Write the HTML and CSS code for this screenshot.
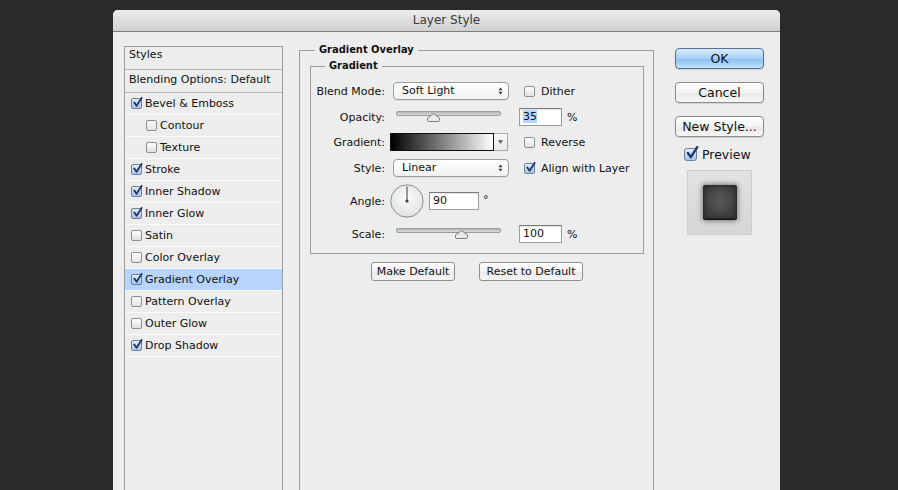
FILE: index.html
```html
<!DOCTYPE html>
<html>
  <head>
    <title>Layer Style</title>
    <meta charset="UTF-8">
    <link rel="stylesheet" href="styles.css">
  </head>
  <body>
    <div class="window">
      <div class="titlebar">Layer Style</div>
      <div class="main">
        <ul class="styles">
          <li class="head first">Styles</li>
          <li class="head">Blending Options: Default</li>
          <li><span class="cb on"><svg viewBox="0 0 12 12"><path d="M2.5 6 L5 9.5 L10.5 1"/></svg></span>Bevel &amp; Emboss</li>
          <li class="sub"><span class="cb"></span>Contour</li>
          <li class="sub"><span class="cb"></span>Texture</li>
          <li><span class="cb on"><svg viewBox="0 0 12 12"><path d="M2.5 6 L5 9.5 L10.5 1"/></svg></span>Stroke</li>
          <li><span class="cb on"><svg viewBox="0 0 12 12"><path d="M2.5 6 L5 9.5 L10.5 1"/></svg></span>Inner Shadow</li>
          <li><span class="cb on"><svg viewBox="0 0 12 12"><path d="M2.5 6 L5 9.5 L10.5 1"/></svg></span>Inner Glow</li>
          <li><span class="cb"></span>Satin</li>
          <li><span class="cb"></span>Color Overlay</li>
          <li class="selected"><span class="cb on"><svg viewBox="0 0 12 12"><path d="M2.5 6 L5 9.5 L10.5 1"/></svg></span>Gradient Overlay</li>
          <li><span class="cb"></span>Pattern Overlay</li>
          <li><span class="cb"></span>Outer Glow</li>
          <li><span class="cb on"><svg viewBox="0 0 12 12"><path d="M2.5 6 L5 9.5 L10.5 1"/></svg></span>Drop Shadow</li>
        </ul>

        <fieldset class="group">
          <legend>Gradient Overlay</legend>
          <fieldset class="inner">
            <legend>Gradient</legend>
            <div class="row r26">
              <label>Blend Mode:</label>
              <div class="ctl">
                <div class="select">Soft Light<svg class="updown" viewBox="0 0 6 10"><path d="M0.5 4 L3 0.8 L5.5 4 Z M0.5 6 L3 9.2 L5.5 6 Z"/></svg></div>
              </div>
              <div class="extra"><span class="cb"></span><span class="cbl">Dither</span></div>
            </div>
            <div class="row r26">
              <label>Opacity:</label>
              <div class="ctl">
                <div class="slider"><div class="track"></div><svg class="thumb" style="left: 35%" viewBox="0 0 13 9"><path d="M6.5 0.5 L12.5 5 V7.5 Q12.5 8.5 11.5 8.5 H1.5 Q0.5 8.5 0.5 7.5 V5 Z"/></svg></div>
              </div>
              <div class="extra"><div class="field"><span class="sel">35</span></div><span class="unit">%</span></div>
            </div>
            <div class="row r24">
              <label>Gradient:</label>
              <div class="ctl">
                <div class="swatch"><div class="ramp"></div><div class="drop"><svg viewBox="0 0 6 4"><path d="M0 0 H6 L3 4 Z"/></svg></div></div>
              </div>
              <div class="extra"><span class="cb"></span><span class="cbl">Reverse</span></div>
            </div>
            <div class="row r28">
              <label>Style:</label>
              <div class="ctl">
                <div class="select">Linear<svg class="updown" viewBox="0 0 6 10"><path d="M0.5 4 L3 0.8 L5.5 4 Z M0.5 6 L3 9.2 L5.5 6 Z"/></svg></div>
              </div>
              <div class="extra"><span class="cb on"><svg viewBox="0 0 12 12"><path d="M2.5 6 L5 9.5 L10.5 1"/></svg></span><span class="cbl">Align with Layer</span></div>
            </div>
            <div class="row r38">
              <label>Angle:</label>
              <div class="ctl">
                <svg class="dial" viewBox="0 0 34 34">
                  <defs>
                    <radialGradient id="dialfill" cx="0.5" cy="0.4" r="0.6">
                      <stop offset="0" stop-color="#fbfbfb"/>
                      <stop offset="1" stop-color="#e2e2e2"/>
                    </radialGradient>
                  </defs>
                  <circle cx="17" cy="17" r="16.2" fill="url(#dialfill)" stroke="#8c8c8c" stroke-width="1"/>
                  <line x1="17" y1="17" x2="17" y2="2.5" stroke="#3a3a3a" stroke-width="1"/>
                  <circle cx="17" cy="17" r="1.6" fill="#3a3a3a"/>
                </svg>
                <div class="field angle">90</div>
                <span class="deg">°</span>
              </div>
            </div>
            <div class="row r28">
              <label>Scale:</label>
              <div class="ctl">
                <div class="slider"><div class="track"></div><svg class="thumb" style="left: 62%" viewBox="0 0 13 9"><path d="M6.5 0.5 L12.5 5 V7.5 Q12.5 8.5 11.5 8.5 H1.5 Q0.5 8.5 0.5 7.5 V5 Z"/></svg></div>
              </div>
              <div class="extra"><div class="field">100</div><span class="unit">%</span></div>
            </div>
          </fieldset>
          <div class="defaults">
            <div class="minibtn make">Make Default</div>
            <div class="minibtn reset">Reset to Default</div>
          </div>
        </fieldset>

        <div class="side">
          <div class="btn ok">OK</div>
          <div class="btn">Cancel</div>
          <div class="btn">New Style...</div>
          <div class="preview-row"><span class="cb big on"><svg viewBox="0 0 12 12"><path d="M2.5 6 L5 9.5 L10.5 1"/></svg></span>Preview</div>
          <div class="preview"><div class="sample"></div></div>
        </div>
      </div>
    </div>
  </body>
</html>
```

FILE: styles.css
```css
html, body {
  margin: 0;
  height: 100%;
}
body {
  background: #2a2a2a;
  font-family: "Lucida Grande", "DejaVu Sans", sans-serif;
  font-size: 11px;
  color: #111;
  overflow: hidden;
}
.window {
  margin: 10px 0 0 113px;
  width: 667px;
  height: 520px;
  background: #ededed;
  border-radius: 5px 5px 0 0;
  overflow: hidden;
}
.titlebar {
  height: 21px;
  line-height: 21px;
  text-align: center;
  font-size: 12px;
  color: #3a3a3a;
  background: linear-gradient(#ececec, #d0d0d0);
  border-bottom: 1px solid #7c7c7c;
}
.main {
  display: flex;
  align-items: flex-start;
  padding: 11px 16px 0 11px;
}

/* styles list */
.styles {
  list-style: none;
  margin: 3px 0 0;
  padding: 0;
  width: 157px;
  height: 470px;
  border: 1px solid #9c9c9c;
  background: #ededed;
}
.styles li {
  height: 21px;
  display: flex;
  align-items: center;
  padding-left: 6px;
  border-bottom: 1px solid #fafafa;
}
.styles li.head {
  box-sizing: border-box;
  height: 23px;
  padding: 0 0 4px 4px;
  border-bottom-color: #b5b5b5;
}
.styles li.head.first {
  padding-bottom: 7px;
}
.styles li.sub {
  padding-left: 21px;
}
.styles li.selected {
  background: #b6d4fd;
}
.styles .cb {
  margin-right: 3px;
}

/* checkboxes */
.cb {
  position: relative;
  display: inline-block;
  box-sizing: border-box;
  width: 11px;
  height: 11px;
  border: 1px solid #8e8e8e;
  border-radius: 2px;
  background: linear-gradient(#fdfdfd, #e2e2e2);
  flex: none;
}
.cb.on {
  border-color: #6f7f98;
  background: linear-gradient(#e6eefa, #a9c3e6);
}
.cb svg {
  position: absolute;
  left: 0;
  top: -2px;
  width: 11px;
  height: 11px;
}
.cb svg path {
  fill: none;
  stroke: #1c3470;
  stroke-width: 2;
  stroke-linecap: round;
  stroke-linejoin: round;
}
.cb.big {
  width: 13px;
  height: 13px;
  border-radius: 3px;
}
.cb.big svg {
  width: 14px;
  height: 14px;
  top: -3px;
  left: 0;
}

/* fieldsets */
fieldset {
  margin: 0;
  min-width: 0;
}
.group {
  margin-left: 16px;
  box-sizing: border-box;
  width: 355px;
  height: 480px;
  padding: 2px 9px 0 10px;
  border: 1px solid #9d9d9d;
}
.group > legend {
  margin-left: 5px;
  padding: 0 4px;
  line-height: 14px;
  font-weight: bold;
  font-family: "DejaVu Sans Condensed", "DejaVu Sans", sans-serif;
}
.inner {
  padding: 5px 8px 5px;
  border: 1px solid #9d9d9d;
}
.inner > legend {
  margin-left: 6px;
  padding: 0 4px;
  line-height: 14px;
  font-weight: bold;
  font-family: "DejaVu Sans Condensed", "DejaVu Sans", sans-serif;
}

/* rows */
.row {
  display: flex;
  align-items: center;
}
.r24 { height: 24px; }
.r26 { height: 26px; }
.r28 { height: 28px; }
.r38 { height: 38px; }
.row > label {
  width: 66px;
  display: flex;
  justify-content: flex-end;
  white-space: nowrap;
  flex: none;
}
.ctl {
  width: 134px;
  display: flex;
  align-items: center;
  flex: none;
}
.extra {
  display: flex;
  align-items: center;
}
.extra .cb {
  margin-left: 5px;
}
.cbl {
  margin-left: 6px;
}

.select {
  position: relative;
  margin-left: 8px;
  box-sizing: border-box;
  width: 116px;
  height: 18px;
  line-height: 16px;
  padding-left: 8px;
  border: 1px solid #9b9b9b;
  border-radius: 4px;
  background: linear-gradient(#ffffff, #f1f1f1);
  box-shadow: 0 1px 0 rgba(0,0,0,0.06);
}
.updown {
  position: absolute;
  right: 5px;
  top: 3px;
  width: 5px;
  height: 10px;
  fill: #3c3c3c;
}

.slider {
  position: relative;
  margin-left: 11px;
  width: 105px;
  height: 14px;
}
.track {
  margin-top: 1px;
  box-sizing: border-box;
  height: 5px;
  border-radius: 2px;
  border: 1px solid #9a9a9a;
  background: linear-gradient(#b5b5b5, #dedede);
}
.thumb {
  position: absolute;
  top: 3px;
  width: 13px;
  height: 9px;
  margin-left: -6px;
}
.thumb path {
  fill: #e9e9e9;
  stroke: #7d7d7d;
  stroke-width: 1;
}

.field {
  box-sizing: border-box;
  width: 43px;
  height: 18px;
  line-height: 16px;
  padding-left: 3px;
  background: #fff;
  border: 1px solid #9c9c9c;
  border-top-color: #7a7a7a;
  box-shadow: inset 0 1px 1px rgba(0,0,0,0.12);
}
.field .sel {
  background: #b5d5ff;
}
.unit {
  margin-left: 5px;
}

.swatch {
  display: flex;
  margin-left: 5px;
  height: 18px;
}
.ramp {
  width: 104px;
  box-sizing: border-box;
  border: 1px solid #111;
  background: linear-gradient(to right, #000, #fff);
}
.drop {
  width: 14px;
  box-sizing: border-box;
  border: 1px solid #a8a8a8;
  border-left: none;
  background: linear-gradient(#fafafa, #e8e8e8);
  display: flex;
  align-items: center;
  justify-content: center;
}
.drop svg {
  width: 5px;
  height: 4px;
  fill: #555;
}

.dial {
  margin-left: 5px;
  width: 34px;
  height: 34px;
}
.field.angle {
  margin-left: 5px;
  width: 50px;
}
.deg {
  margin-left: 4px;
  align-self: flex-start;
  margin-top: 9px;
}

.defaults {
  display: flex;
  justify-content: center;
  gap: 24px;
  margin-top: 8px;
}
.minibtn {
  box-sizing: border-box;
  height: 19px;
  line-height: 17px;
  text-align: center;
  border: 1px solid #8f8f8f;
  border-radius: 3px;
  background: linear-gradient(#ffffff, #f3f3f3 50%, #e9e9e9 51%, #f5f5f5);
}
.make { width: 84px; }
.reset { width: 104px; }

/* buttons column */
.side {
  margin: 5px 0 0 21px;
  width: 89px;
  display: flex;
  flex-direction: column;
}
.btn {
  box-sizing: border-box;
  height: 21px;
  line-height: 19px;
  margin-bottom: 13px;
  text-align: center;
  font-size: 12.5px;
  border: 1px solid #8a8a8a;
  border-radius: 4px;
  background: linear-gradient(#ffffff, #f4f4f4 50%, #e8e8e8 51%, #f6f6f6);
  box-shadow: 0 1px 1px rgba(0,0,0,0.12);
}
.btn.ok {
  border-color: #5b6f95;
  background: linear-gradient(#d9ecfd, #a6d0f6 50%, #86bdf0 51%, #c4e4fd);
}
.preview-row {
  display: flex;
  align-items: center;
  height: 16px;
  margin: -4px 0 0 9px;
  font-size: 12.5px;
}
.preview-row .cb {
  margin-right: 5px;
}
.preview {
  margin: 8px 0 0 12px;
  box-sizing: border-box;
  width: 65px;
  height: 65px;
  border: 1px solid #cdcdcd;
  background: linear-gradient(#e2e2e2, #d6d6d6);
  display: flex;
  align-items: center;
  justify-content: center;
}
.sample {
  width: 34px;
  height: 34px;
  border-radius: 2px;
  background: radial-gradient(circle at 50% 45%, #5a5a5a, #3a3a3a 75%);
  border-bottom: 1px solid #111;
  box-shadow: 0 0 5px 1px rgba(0,0,0,0.45), inset 0 0 4px rgba(0,0,0,0.6);
}
```
